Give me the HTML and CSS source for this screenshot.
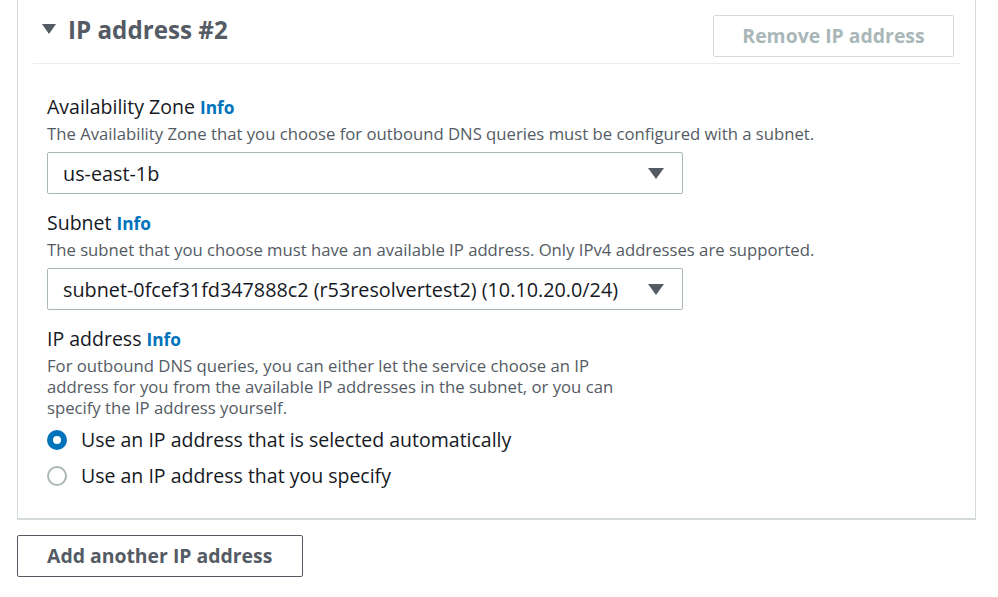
FILE: index.html
```html
<!DOCTYPE html>
<html lang="en">
<head>
<meta charset="utf-8">
<title>IP address #2</title>
<link rel="stylesheet" href="styles.css">
</head>
<body>
<div class="panel">
  <div class="panel-header">
    <div class="title">
      <svg class="caret" width="14" height="12" viewBox="0 0 14 12"><polygon points="0,1 14,1 7,11" fill="#545b64"/></svg>
      <h2>IP address #2</h2>
    </div>
    <button class="btn btn-disabled" disabled>Remove IP address</button>
  </div>
  <div class="panel-body">
    <div class="field">
      <div class="label">Availability Zone <a class="info">Info</a></div>
      <div class="desc">The Availability Zone that you choose for outbound DNS queries must be configured with a subnet.</div>
      <div class="select">
        <span>us-east-1b</span>
        <svg class="arrow" width="16" height="11" viewBox="0 0 16 11"><polygon points="0,0 16,0 8,11" fill="#545b64"/></svg>
      </div>
    </div>
    <div class="field">
      <div class="label">Subnet <a class="info">Info</a></div>
      <div class="desc">The subnet that you choose must have an available IP address. Only IPv4 addresses are supported.</div>
      <div class="select">
        <span>subnet-0fcef31fd347888c2 (r53resolvertest2) (10.10.20.0/24)</span>
        <svg class="arrow" width="16" height="11" viewBox="0 0 16 11"><polygon points="0,0 16,0 8,11" fill="#545b64"/></svg>
      </div>
    </div>
    <div class="field">
      <div class="label">IP address <a class="info">Info</a></div>
      <div class="desc narrow">For outbound DNS queries, you can either let the service choose an IP address for you from the available IP addresses in the subnet, or you can specify the IP address yourself.</div>
      <div class="radios">
        <label class="radio"><span class="dot checked"></span>Use an IP address that is selected automatically</label>
        <label class="radio"><span class="dot"></span>Use an IP address that you specify</label>
      </div>
    </div>
  </div>
</div>
<button class="btn btn-add">Add another IP address</button>
</body>
</html>
```

FILE: styles.css
```css
* { box-sizing: border-box; }
html, body { margin: 0; padding: 0; background: #ffffff; }
body {
  font-family: "Open Sans", "Liberation Sans", sans-serif;
  color: #16191f;
  padding-left: 17px;
}
.panel {
  width: 959px;
  border: 1px solid #d5dbdb;
  border-top: none;
  border-bottom-width: 2px;
}
.panel-header {
  margin: 0 15px;
  height: 64px;
  padding: 15px 6px 7px 9px;
  border-bottom: 1px solid #eaeded;
  display: flex;
  justify-content: space-between;
  align-items: flex-start;
}
.title {
  display: flex;
  align-items: center;
  gap: 12px;
  height: 30px;
}
.caret { margin-top: -2px; }
h2 {
  margin: 0;
  font-size: 24.2px;
  font-weight: 700;
  color: #545b64;
  line-height: 30px;
}
.btn {
  font-family: inherit;
  font-size: 19.4px;
  font-weight: 700;
  background: #ffffff;
  border-radius: 2px;
  height: 42px;
  padding: 0 29px;
  line-height: 40px;
}
.btn-disabled {
  width: 241px;
  padding: 0;
  text-align: center;
  color: #aab7b8;
  border: 1px solid #d5dbdb;
}
.btn-add {
  margin-top: 15px;
  width: 286px;
  text-align: left;
  color: #545b64;
  border: 1px solid #545b64;
}
.panel-body {
  padding: 31px 29px 30px 29px;
  display: flex;
  flex-direction: column;
  gap: 17px;
}
.label {
  font-size: 19.5px;
  line-height: 24px;
  color: #16191f;
}
.info {
  color: #0073bb;
  font-weight: 700;
  font-size: 17.3px;
}
.desc {
  font-size: 16.7px;
  line-height: 21px;
  color: #545b64;
  margin-top: 3px;
}
.desc.narrow { width: 590px; }
.select {
  margin-top: 8px;
  width: 636px;
  height: 42px;
  border: 1px solid #aab7b8;
  border-radius: 2px;
  display: flex;
  align-items: center;
  justify-content: space-between;
  padding: 0 18px 0 15px;
  font-size: 19.8px;
  color: #16191f;
}
.radios {
  margin-top: 10px;
  display: flex;
  flex-direction: column;
  gap: 12px;
}
.radio {
  display: flex;
  align-items: center;
  gap: 14px;
  font-size: 19.5px;
  line-height: 24px;
  color: #16191f;
}
.dot {
  width: 20px;
  height: 20px;
  border-radius: 50%;
  border: 2px solid #aab7b8;
  flex: none;
}
.dot.checked {
  border: 6px solid #0073bb;
}
```
